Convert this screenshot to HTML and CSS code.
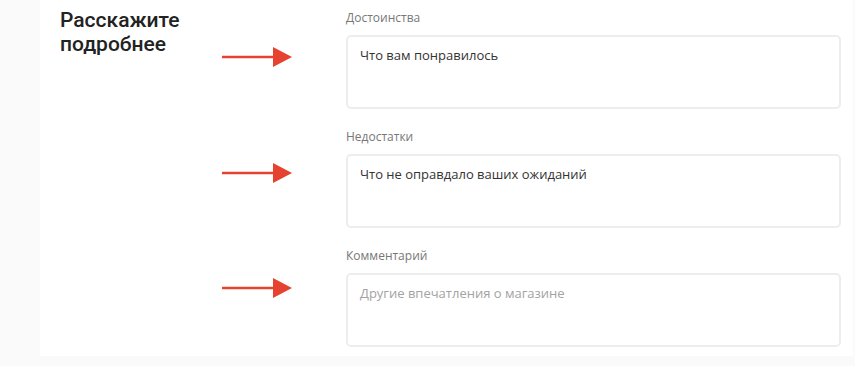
FILE: index.html
```html
<!DOCTYPE html>
<html lang="ru">
<head>
    <meta charset="UTF-8">
    <meta name="viewport" content="width=device-width, initial-scale=1.0">
    <title>Расскажите подробнее</title>
    <link rel="stylesheet" href="styles.css">
</head>
<body>
    <div class="card">
        <h2 class="title">Расскажите<br>подробнее</h2>
        <div class="fields">
            <div class="row">
                <svg class="arrow arrow-1" width="70" height="20" viewBox="0 0 70 20"><line x1="0" y1="10" x2="53" y2="10" /><polygon points="51,0 70,10 51,20" /></svg>
                <div class="field">
                    <label for="pros">Достоинства</label>
                    <textarea id="pros" class="dark" placeholder="Что вам понравилось"></textarea>
                </div>
            </div>
            <div class="row">
                <svg class="arrow arrow-2" width="70" height="20" viewBox="0 0 70 20"><line x1="0" y1="10" x2="53" y2="10" /><polygon points="51,0 70,10 51,20" /></svg>
                <div class="field">
                    <label for="cons">Недостатки</label>
                    <textarea id="cons" class="dark" placeholder="Что не оправдало ваших ожиданий"></textarea>
                </div>
            </div>
            <div class="row">
                <svg class="arrow arrow-3" width="70" height="20" viewBox="0 0 70 20"><line x1="0" y1="10" x2="53" y2="10" /><polygon points="51,0 70,10 51,20" /></svg>
                <div class="field">
                    <label for="comment">Комментарий</label>
                    <textarea id="comment" placeholder="Другие впечатления о магазине"></textarea>
                </div>
            </div>
        </div>
    </div>
</body>
</html>
```
FILE: styles.css
```css
body {
    margin: 0;
    background-color: #fafafa;
    font-family: "Open Sans", "Noto Sans", sans-serif;
    height: 366px;
}
.card {
    display: flex;
    margin-left: 40px;
    width: 813px;
    padding: 10px 0 9px 20px;
    box-sizing: border-box;
    background-color: #fff;
}
.title {
    width: 162px;
    margin: -2px 0 0 0;
    font-family: Roboto, "Open Sans", sans-serif;
    font-size: 21px;
    font-weight: 500;
    line-height: 24px;
    color: #222;
}
.fields {
    display: flex;
    flex-direction: column;
    gap: 20px;
}
.row {
    display: flex;
}
.arrow {
    margin-right: 54px;
    flex-shrink: 0;
}
.arrow-1 {
    margin-top: 37px;
}
.arrow-2 {
    margin-top: 34px;
}
.arrow-3 {
    margin-top: 30px;
}
.arrow line {
    stroke: #e5432f;
    stroke-width: 2.5;
}
.arrow polygon {
    fill: #e5432f;
}
.field {
    display: flex;
    flex-direction: column;
    width: 495px;
}
label {
    font-size: 12px;
    line-height: 16px;
    color: #777;
    margin-bottom: 9px;
}
textarea {
    height: 74px;
    padding: 9px 12px;
    border: 2px solid #ededed;
    border-radius: 5px;
    box-sizing: border-box;
    font-family: inherit;
    font-size: 13px;
    line-height: 18px;
    resize: none;
    outline: none;
}
textarea::placeholder {
    color: #a3a3a3;
}
textarea.dark::placeholder {
    color: #333;
}
```
